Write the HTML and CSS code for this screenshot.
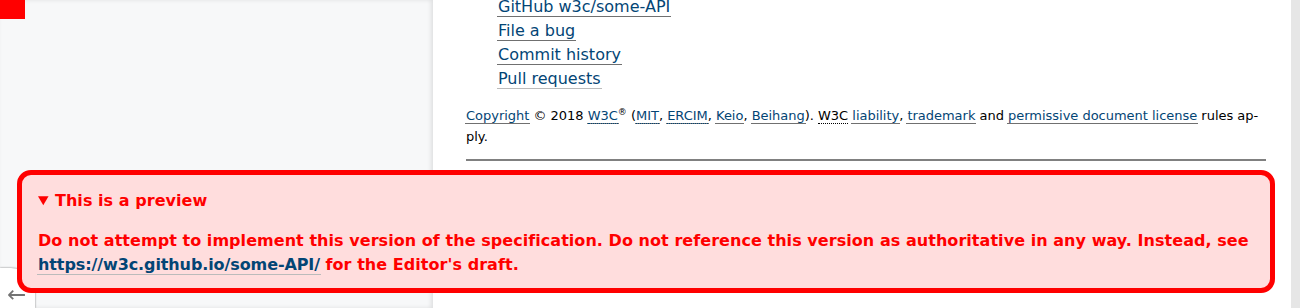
FILE: index.html
```html
<!DOCTYPE html>
<html lang="en">
<head>
<meta charset="utf-8">
<title>some-API</title>
<link rel="stylesheet" href="styles.css">
</head>
<body>
<nav class="toc" aria-label="Table of contents"></nav>
<div class="mark"></div>
<main class="main">
  <ul class="links">
    <li><a href="#gh">GitHub w3c/some-API</a></li>
    <li><a href="#bug">File a bug</a></li>
    <li><a href="#commits">Commit history</a></li>
    <li><a class="visited" href="#pulls">Pull requests</a></li>
  </ul>
  <p class="copyright"><a href="#c">Copyright</a> © 2018 <a href="#w3c"><abbr title="World Wide Web Consortium">W3C</abbr></a><sup>®</sup> (<a href="#mit"><abbr title="Massachusetts Institute of Technology">MIT</abbr></a>, <a href="#ercim"><abbr title="European Research Consortium for Informatics and Mathematics">ERCIM</abbr></a>, <a href="#keio">Keio</a>, <a href="#beihang">Beihang</a>). <abbr class="plain" title="World Wide Web Consortium">W3C</abbr> <a href="#liability">liability</a>, <a href="#trademark">trademark</a> and <a href="#license">permissive document license</a> rules ap&shy;ply.</p>
  <hr class="rule">
</main>
<div class="toc-nav"><a href="#toc" class="toc-toggle">←</a></div>
<details class="warning" open>
  <summary>This is a preview</summary>
  <p>Do not attempt to implement this version of the specification. Do not reference this version as authoritative in any way. Instead, see <a class="visited ed" href="#ed">https://w3c.github.io/some-API/</a> for the Editor's draft.</p>
</details>
<div class="scrollbar"></div>
</body>
</html>
```
FILE: styles.css
```css
html, body {
  margin: 0;
  padding: 0;
  background: #fff;
  height: 100%;
  overflow: hidden;
}
body {
  font-family: "DejaVu Sans", sans-serif;
  font-size: 16px;
  line-height: 1.5;
  color: #000;
}
.toc {
  position: fixed;
  top: 0;
  bottom: 0;
  left: 0;
  width: 433px;
  background: #f7f8f9;
  box-shadow: inset -2px 0 4px rgba(0, 0, 0, 0.1);
}
.mark {
  position: fixed;
  top: 0;
  left: 0;
  width: 25px;
  height: 19px;
  background: #f00;
}
.main {
  margin: -5px 0 0 466px;
  width: 800px;
}
a[href] {
  color: #034575;
  text-decoration: none;
  border-bottom: 1px solid #707070;
  padding: 0 1px;
  margin: 0 -1px;
}
a.visited {
  border-bottom-color: #bbb;
}
.links {
  list-style: none;
  margin: 0 0 14px 0;
  padding: 0 0 0 32px;
}
.copyright {
  font-size: 13px;
  line-height: 21px;
  margin: 0 0 12px 0;
  letter-spacing: -0.02px;
}
abbr[title] {
  text-decoration: none;
  border-bottom: 1px dotted;
}
.copyright sup {
  font-size: 9px;
  line-height: 0;
}
.rule {
  margin: 0;
  border: none;
  border-top: 2px solid #808080;
  height: 0;
}
.toc-nav {
  position: fixed;
  left: 0;
  bottom: 0;
}
.toc-nav .toc-toggle {
  display: block;
  width: 30px;
  height: 36px;
  padding: 2px 3px 2px 2px;
  margin: 0;
  background: #fff;
  box-shadow: 0 0 2px rgba(0, 0, 0, 0.6);
  border: none;
  border-top-right-radius: 24px;
  color: rgba(0, 0, 0, 0.55);
  font-size: 23px;
  line-height: 48px;
  text-indent: 5px;
}
.warning {
  position: fixed;
  left: 17px;
  right: 25px;
  bottom: 15px;
  z-index: 1000;
  background: #fdd;
  color: #f00;
  font-weight: bold;
  padding: 14px 16px 11px;
  border: 5px solid #f00;
  border-radius: 14px;
  letter-spacing: 0.05px;
}
.warning summary {
  cursor: pointer;
}
.warning p {
  margin: 16px 0 0;
}
.warning .ed {
  letter-spacing: -0.1px;
}
.scrollbar {
  position: fixed;
  top: 0;
  right: 0;
  bottom: 0;
  width: 9px;
  background: #e6e6e6;
}
```
